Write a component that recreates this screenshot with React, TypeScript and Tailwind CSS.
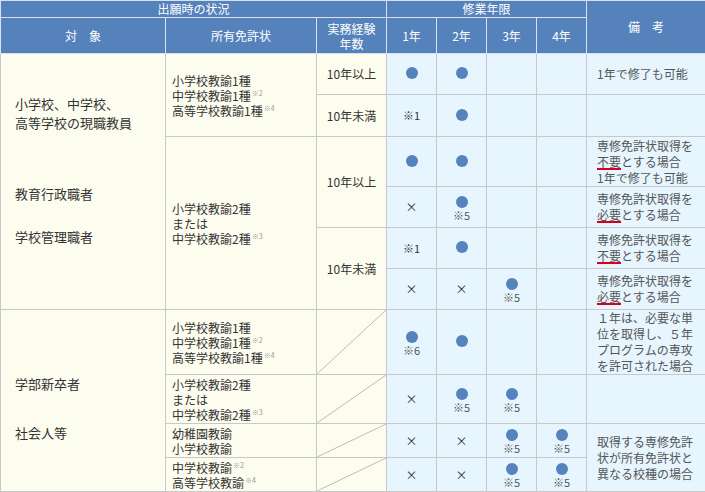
import React from "react";

const Dot = () => <span className="inline-block w-[12px] h-[12px] rounded-full bg-[#5783bd]" />;
const Note = ({ n }: { n: string }) => <div className="text-[11px] text-[#555] leading-[14px]">※{n}</div>;
const Sup = ({ n }: { n: string }) => <span className="text-[7px] text-[#999] ml-[1px] relative top-[-5px] leading-none">※{n}</span>;
const DotN = ({ n }: { n: string }) => (
  <div className="flex flex-col items-center pt-[3px]"><Dot /><Note n={n} /></div>
);
const U = ({ c }: { c: string }) => <span className="border-b-2 border-[#d9001b] leading-[13px] inline-block">{c}</span>;

const Diag = () => (
  <svg className="absolute inset-0 w-full h-full" preserveAspectRatio="none" viewBox="0 0 100 100">
    <line x1="0" y1="100" x2="100" y2="0" stroke="#bbb" strokeWidth="1" vectorEffect="non-scaling-stroke" />
  </svg>
);

export default function App() {
  const hd = "bg-[#5582bb] text-white border border-[#d8e2ef] font-normal text-center";
  const L = "bg-[#fdfdef] border border-[#c8c8c8] align-middle";
  const R = "bg-[#e7f5fe] border border-[#c8c8c8] text-center align-middle";
  const RN = "bg-[#e7f5fe] border border-[#c8c8c8] align-middle text-[#555] text-[12px] leading-[16px] pl-[10px] pr-[4px]";
  return (
    <div className="w-[705px] h-[492px] bg-white text-[#333] text-[12px]" style={{ fontFamily: '"Noto Sans CJK JP", "Liberation Sans", sans-serif' }}>
      <table className="table-fixed border-collapse w-[705px]">
        <colgroup>
          <col className="w-[165px]" /><col className="w-[151px]" /><col className="w-[70px]" />
          <col className="w-[50px]" /><col className="w-[50px]" /><col className="w-[50px]" /><col className="w-[50px]" /><col className="w-[119px]" />
        </colgroup>
        <tbody>
          <tr className="h-[17px] text-[12px] leading-[14px]">
            <th colSpan={3} className={hd}>出願時の状況</th>
            <th colSpan={4} className={hd}>修業年限</th>
            <th rowSpan={2} className={hd}>備　考</th>
          </tr>
          <tr className="h-[36px] text-[12px] leading-[15px]">
            <th className={hd}>対　象</th>
            <th className={hd}>所有免許状</th>
            <th className={hd}>実務経験<br />年数</th>
            <th className={hd}>1年</th><th className={hd}>2年</th><th className={hd}>3年</th><th className={hd}>4年</th>
          </tr>
          <tr className="h-[41px]">
            <td rowSpan={6} className={L + " align-top pl-[14px] text-[13px] leading-[19px]"}>
              <div className="pt-[40px]">小学校、中学校、<br />高等学校の現職教員</div>
              <div className="mt-[52px]">教育行政職者</div>
              <div className="mt-[24px]">学校管理職者</div>
            </td>
            <td rowSpan={2} className={L + " pl-[6px] leading-[15px]"}>小学校教諭1種<br />中学校教諭1種<Sup n="2" /><br />高等学校教諭1種<Sup n="4" /></td>
            <td className={L + " text-center"}>10年以上</td>
            <td className={R}><Dot /></td><td className={R}><Dot /></td><td className={R}></td><td className={R}></td>
            <td className={RN}>1年で修了も可能</td>
          </tr>
          <tr className="h-[42px]">
            <td className={L + " text-center"}>10年未満</td>
            <td className={R + " text-[11px]"}>※1</td><td className={R}><Dot /></td><td className={R}></td><td className={R}></td>
            <td className={RN}></td>
          </tr>
          <tr className="h-[50px]">
            <td rowSpan={4} className={L + " pl-[6px] leading-[15px]"}>小学校教諭2種<br />または<br />中学校教諭2種<Sup n="3" /></td>
            <td rowSpan={2} className={L + " text-center"}>10年以上</td>
            <td className={R}><Dot /></td><td className={R}><Dot /></td><td className={R}></td><td className={R}></td>
            <td className={RN}>専修免許状取得を<br /><U c="不要" />とする場合<br />1年で修了も可能</td>
          </tr>
          <tr className="h-[41px]">
            <td className={R}>×</td><td className={R}><DotN n="5" /></td><td className={R}></td><td className={R}></td>
            <td className={RN}>専修免許状取得を<br /><U c="必要" />とする場合</td>
          </tr>
          <tr className="h-[41px]">
            <td rowSpan={2} className={L + " text-center"}>10年未満</td>
            <td className={R + " text-[11px]"}>※1</td><td className={R}><Dot /></td><td className={R}></td><td className={R}></td>
            <td className={RN}>専修免許状取得を<br /><U c="不要" />とする場合</td>
          </tr>
          <tr className="h-[41px]">
            <td className={R}>×</td><td className={R}>×</td><td className={R}><DotN n="5" /></td><td className={R}></td>
            <td className={RN}>専修免許状取得を<br /><U c="必要" />とする場合</td>
          </tr>
          <tr className="h-[65px]">
            <td rowSpan={4} className={L + " align-top pl-[14px] text-[13px] leading-[19px]"}>
              <div className="pt-[64px]">学部新卒者</div>
              <div className="mt-[30px]">社会人等</div>
            </td>
            <td className={L + " pl-[6px] leading-[15px]"}>小学校教諭1種<br />中学校教諭1種<Sup n="2" /><br />高等学校教諭1種<Sup n="4" /></td>
            <td className={L + " relative"}><Diag /></td>
            <td className={R}><DotN n="6" /></td><td className={R}><Dot /></td><td className={R}></td><td className={R}></td>
            <td className={RN + " pl-[8px]"}>１年は、必要な単<br />位を取得し、５年<br />プログラムの専攻<br />を許可された場合</td>
          </tr>
          <tr className="h-[49px]">
            <td className={L + " pl-[6px] leading-[15px]"}>小学校教諭2種<br />または<br />中学校教諭2種<Sup n="3" /></td>
            <td className={L + " relative"}><Diag /></td>
            <td className={R}>×</td><td className={R}><DotN n="5" /></td><td className={R}><DotN n="5" /></td><td className={R}></td>
            <td className={RN}></td>
          </tr>
          <tr className="h-[34px]">
            <td className={L + " pl-[6px] leading-[15px]"}>幼稚園教諭<br />小学校教諭</td>
            <td className={L + " relative"}><Diag /></td>
            <td className={R}>×</td><td className={R}>×</td><td className={R}><DotN n="5" /></td><td className={R}><DotN n="5" /></td>
            <td rowSpan={2} className={RN + " pl-[8px]"}>取得する専修免許<br />状が所有免許状と<br />異なる校種の場合</td>
          </tr>
          <tr className="h-[34px]">
            <td className={L + " pl-[6px] leading-[15px]"}>中学校教諭<Sup n="2" /><br />高等学校教諭<Sup n="4" /></td>
            <td className={L + " relative"}><Diag /></td>
            <td className={R}>×</td><td className={R}>×</td><td className={R}><DotN n="5" /></td><td className={R}><DotN n="5" /></td>
          </tr>
        </tbody>
      </table>
    </div>
  );
}
